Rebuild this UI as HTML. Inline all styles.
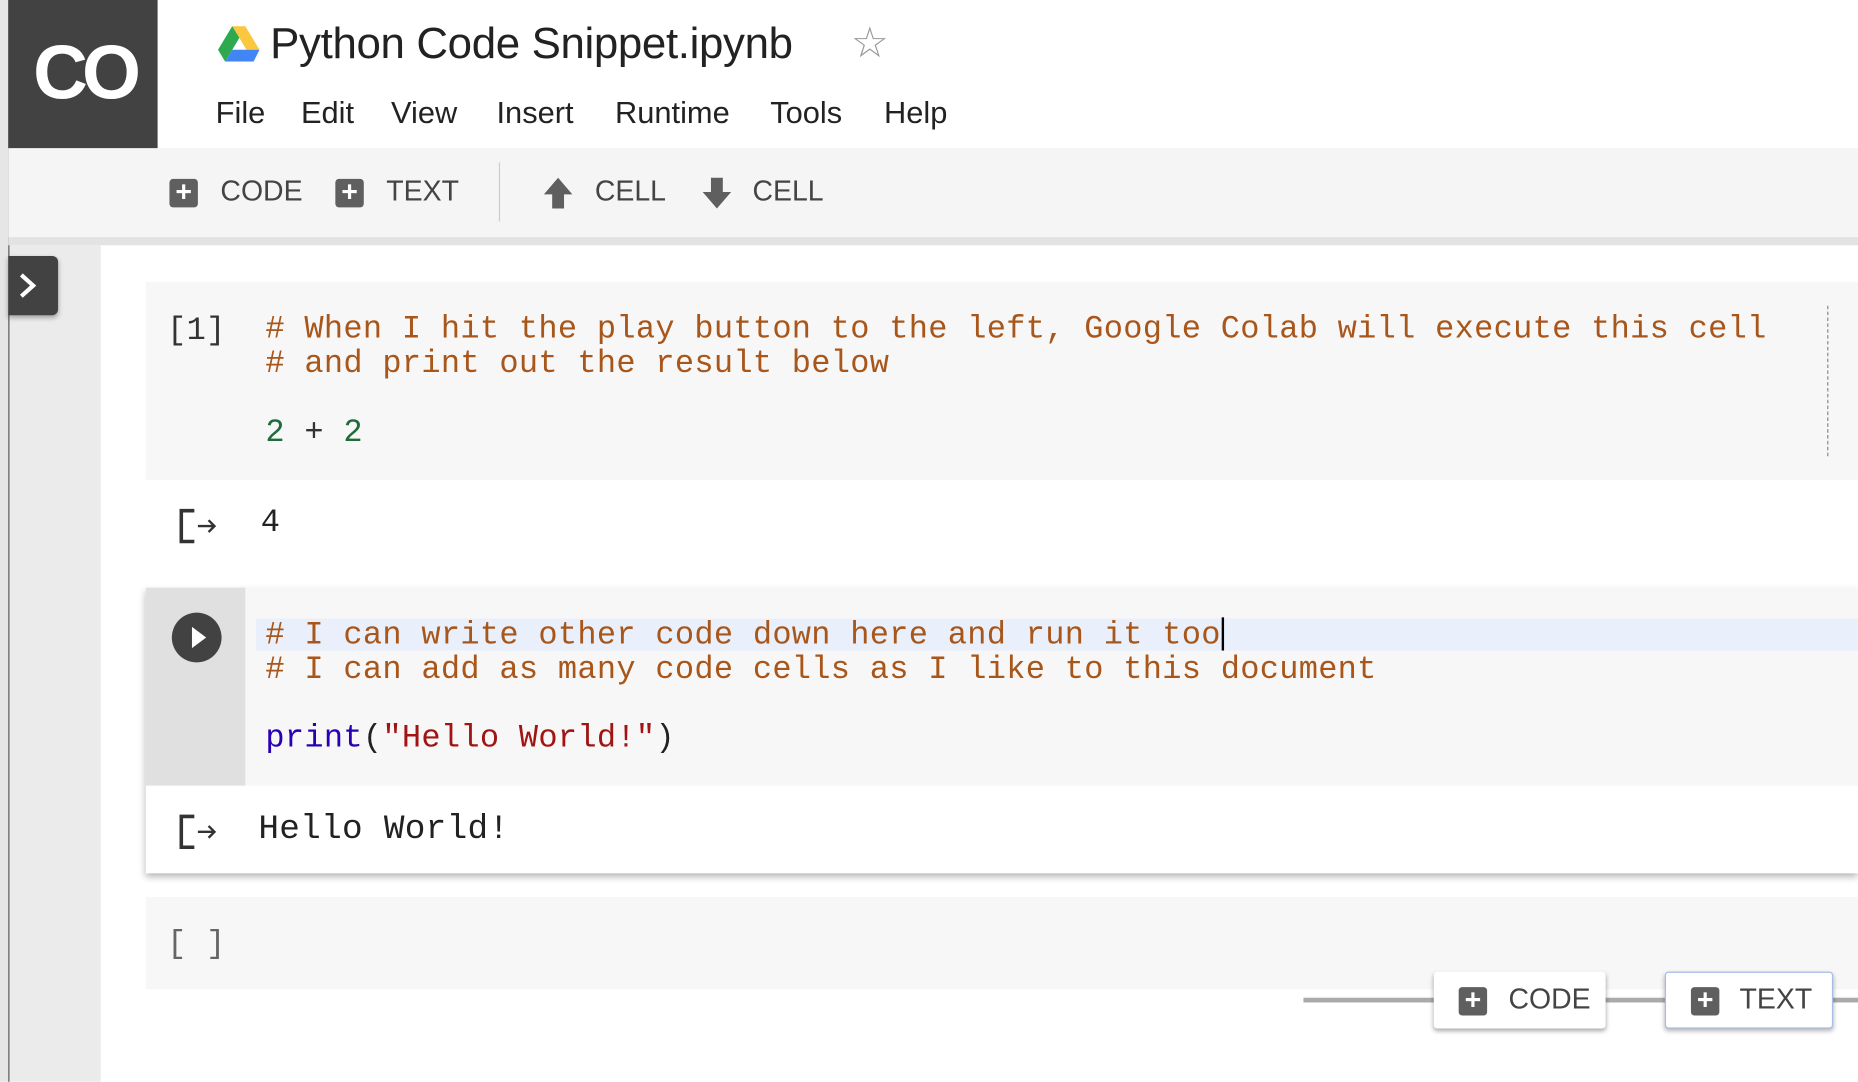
<!DOCTYPE html>
<html><head><meta charset="utf-8"><style>
html,body{margin:0;padding:0;width:1858px;height:1082px;overflow:hidden;background:#fff}
#w{position:absolute;left:0;top:0;width:1568px;height:913px;transform:scale(1.18495);transform-origin:0 0;font-family:"Liberation Sans",sans-serif;overflow:hidden}
.a{position:absolute}
.mono{font-family:"Liberation Mono",monospace;font-size:27px;white-space:pre;letter-spacing:0.25px}
.c{color:#a8561a}
.tb{font-size:24px;color:#444;top:148px}
.m{font-size:26px;color:#222;top:80px}
.plus{width:24px;height:24px;background:#5f5f5f;border-radius:3px;color:#fff;font-size:24px;line-height:23px;text-align:center;font-weight:bold}
</style></head><body><div id="w">
<div class="a" style="left:0;top:0;width:7px;height:913px;background:#e6e6e6;border-right:1.5px solid #555"></div>
<div class="a" style="left:7px;top:125px;width:1561px;height:75px;background:#f5f5f5"></div>
<div class="a" style="left:7px;top:200px;width:1561px;height:7px;background:#e3e3e3"></div>
<div class="a" style="left:8px;top:207px;width:77px;height:706px;background:#ebebeb"></div>
<div class="a" style="left:7px;top:0;width:126px;height:125px;background:#424242"></div>
<div class="a" style="left:28px;top:24px;color:#fff;font-size:64px;font-weight:bold;letter-spacing:-5px">CO</div>
<svg class="a" style="left:184px;top:22px" width="36" height="30" viewBox="0 0 36 30"><path d="M12 0h11l12 20h-11z" fill="#fbc640"/><path d="M12 0l6 10-12 20L0 20z" fill="#2da94f"/><path d="M6 30l6-10h23l-5 10z" fill="#4285f4"/></svg>
<div class="a" style="left:228px;top:16px;font-size:37px;color:#222;letter-spacing:-0.3px">Python Code Snippet.ipynb</div>
<div class="a" style="left:718px;top:15px;font-size:36px;color:#9a9a9a">☆</div>
<div class="a m" style="left:182px">File</div>
<div class="a m" style="left:254px">Edit</div>
<div class="a m" style="left:330px">View</div>
<div class="a m" style="left:419px">Insert</div>
<div class="a m" style="left:519px">Runtime</div>
<div class="a m" style="left:650px">Tools</div>
<div class="a m" style="left:746px">Help</div>
<div class="a plus" style="left:143px;top:151px">+</div><div class="a tb" style="left:186px">CODE</div>
<div class="a plus" style="left:283px;top:151px">+</div><div class="a tb" style="left:326px">TEXT</div>
<div class="a" style="left:421px;top:137px;width:1px;height:50px;background:#ccc"></div>
<svg class="a" style="left:457px;top:149px" width="28" height="28" viewBox="0 0 28 28"><path d="M14 1L2 15h7v12h10V15h7z" fill="#5f5f5f"/></svg><div class="a tb" style="left:502px">CELL</div>
<svg class="a" style="left:591px;top:149px" width="28" height="28" viewBox="0 0 28 28"><path d="M14 27L2 13h7V1h10v12h7z" fill="#5f5f5f"/></svg><div class="a tb" style="left:635px">CELL</div>
<div class="a" style="left:7px;top:216px;width:42px;height:50px;background:#424242;border-radius:0 5px 5px 0;box-shadow:0 2px 4px rgba(0,0,0,.3)"></div>
<svg class="a" style="left:14px;top:229px" width="20" height="24"><path d="M4 3l10 9-10 9" stroke="#fff" stroke-width="3.5" fill="none"/></svg>
<div class="a" style="left:123px;top:238px;width:1445px;height:167px;background:#f7f7f7"></div>
<div class="a mono" style="left:141px;top:265px;color:#333">[1]</div>
<div class="a mono c" style="left:224px;top:265px;line-height:29px"># When I hit the play button to the left, Google Colab will execute this cell
# and print out the result below

<span style="color:#1f6b3c">2</span><span style="color:#333"> + </span><span style="color:#1f6b3c">2</span></div>
<div class="a" style="left:1542px;top:258px;height:127px;border-left:1.5px dashed #888"></div>
<svg class="a" style="left:150px;top:428px" width="36" height="32"><path d="M14 3H3v26h11" stroke="#333" stroke-width="3" fill="none"/><path d="M17 16h14M26 11l5 5-5 5" stroke="#333" stroke-width="2" fill="none"/></svg>
<div class="a mono" style="left:220px;top:427px;color:#222">4</div>
<div class="a" style="left:123px;top:496px;width:1445px;height:241px;background:#fff;box-shadow:0 3px 6px rgba(0,0,0,.3)"></div>
<div class="a" style="left:123px;top:496px;width:1445px;height:167px;background:#f7f7f7"></div>
<div class="a" style="left:123px;top:496px;width:84px;height:167px;background:#e0e0e0"></div>
<div class="a" style="left:145px;top:517px;width:42px;height:42px;border-radius:50%;background:#424242"></div>
<svg class="a" style="left:145px;top:517px" width="42" height="42"><path d="M17 12l12 9-12 9z" fill="#fff"/></svg>
<div class="a" style="left:216px;top:522px;width:1352px;height:27px;background:#e9f0fb"></div>
<div class="a mono c" style="left:224px;top:523px;line-height:29px"># I can write other code down here and run it too
# I can add as many code cells as I like to this document

<span style="color:#2a00b3">print</span><span style="color:#222">(</span><span style="color:#a11414">"Hello World!"</span><span style="color:#222">)</span></div>
<div class="a" style="left:1031px;top:521px;width:2px;height:28px;background:#000"></div>
<svg class="a" style="left:150px;top:686px" width="36" height="32"><path d="M14 3H3v26h11" stroke="#333" stroke-width="3" fill="none"/><path d="M17 16h14M26 11l5 5-5 5" stroke="#333" stroke-width="2" fill="none"/></svg>
<div class="a mono" style="left:218px;top:683px;color:#222;font-size:29px">Hello World!</div>
<div class="a" style="left:123px;top:757px;width:1445px;height:78px;background:#f7f7f7"></div>
<div class="a mono" style="left:141px;top:783px;color:#666">[ ]</div>
<div class="a" style="left:1100px;top:842px;width:468px;height:4px;background:#aaa"></div>
<div class="a" style="left:1210px;top:820px;width:145px;height:48px;background:#fff;border-radius:3px;box-shadow:0 2px 4px rgba(0,0,0,.35)"></div>
<div class="a plus" style="left:1231px;top:833px">+</div><div class="a" style="left:1273px;top:830px;font-size:24px;color:#444">CODE</div>
<div class="a" style="left:1405px;top:820px;width:140px;height:46px;background:#fff;border-radius:3px;border:1px solid #a7bde6;box-shadow:0 2px 4px rgba(0,0,0,.3)"></div>
<div class="a plus" style="left:1427px;top:833px">+</div><div class="a" style="left:1468px;top:830px;font-size:24px;color:#444">TEXT</div>
</div></body></html>
